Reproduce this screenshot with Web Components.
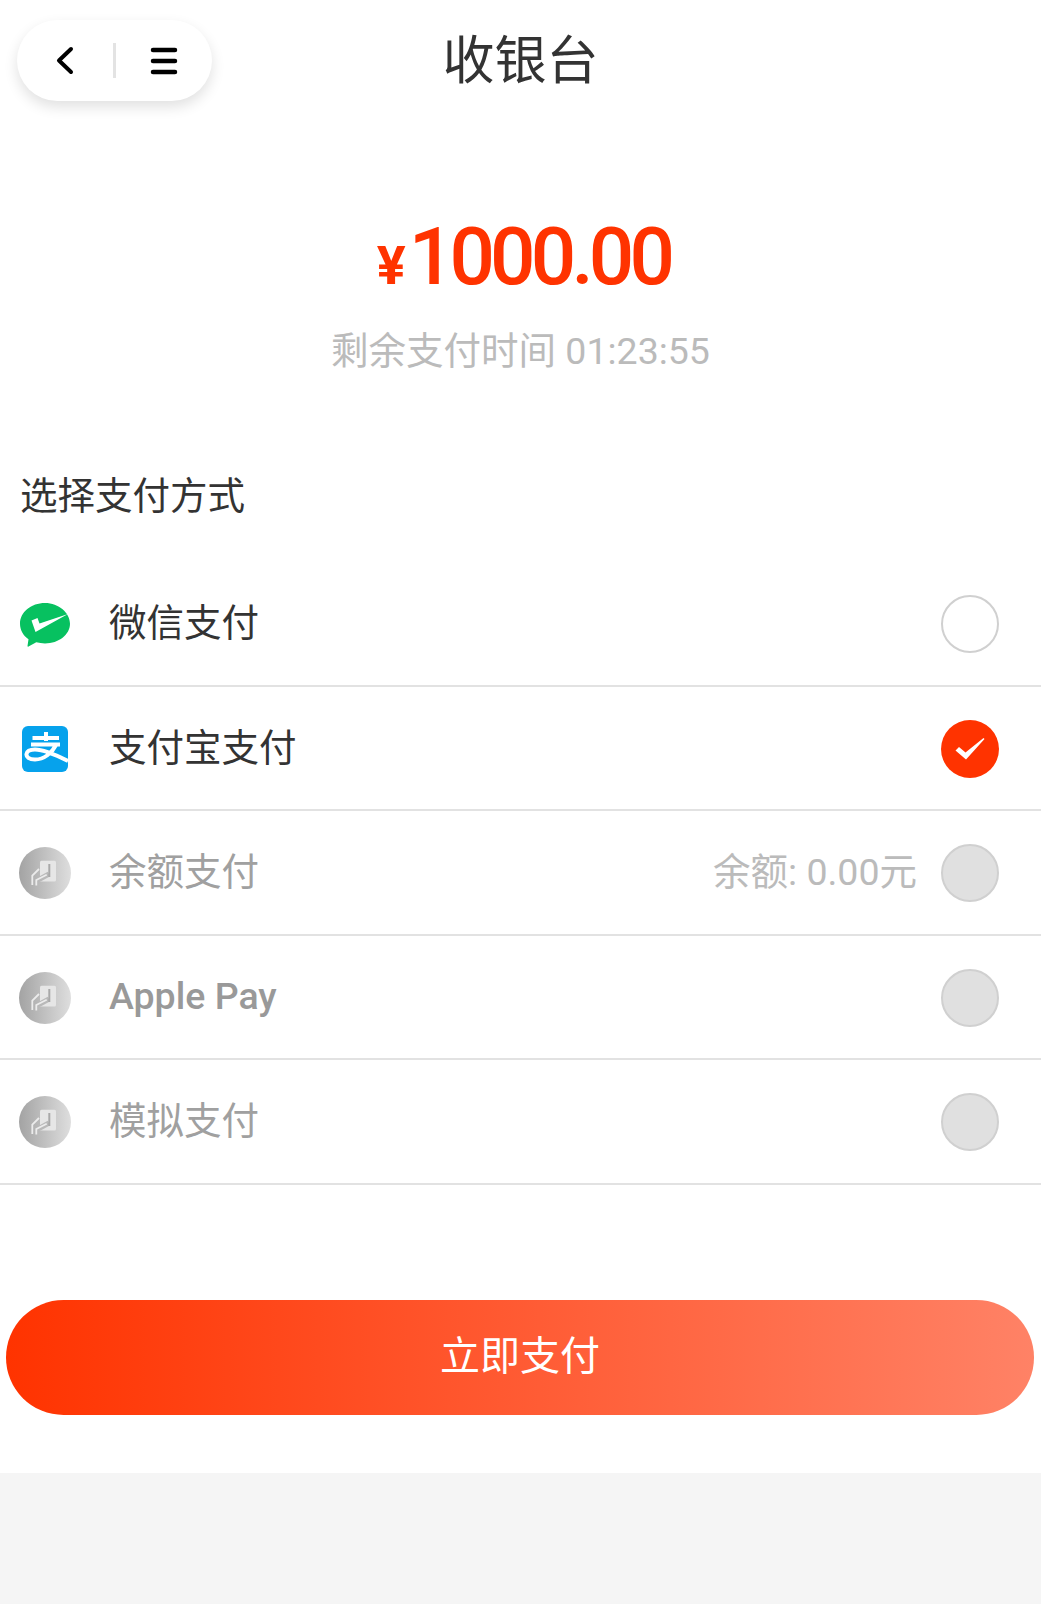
<!DOCTYPE html>
<html><head><meta charset="utf-8">
<style>
html,body{margin:0;padding:0;background:#f5f5f5}
body{font-family:Roboto,"Noto Sans CJK SC",sans-serif;color:#333}
</style></head>
<body>
<checkout-page>
  <nav-bar title="收银台"></nav-bar>
  <amount-panel amount="1000.00" note="剩余支付时间 01:23:55"></amount-panel>
  <section-title>选择支付方式</section-title>
  <pay-option label="微信支付" icon="wechat"></pay-option>
  <pay-option label="支付宝支付" icon="alipay" checked></pay-option>
  <pay-option label="余额支付" icon="grey" disabled extra="余额: 0.00元"></pay-option>
  <pay-option label="Apple Pay" icon="grey" disabled bold></pay-option>
  <pay-option label="模拟支付" icon="grey" disabled></pay-option>
  <pay-button>立即支付</pay-button>
</checkout-page>
<script>
class CheckoutPage extends HTMLElement{constructor(){super();this.attachShadow({mode:'open'}).innerHTML=`<style>:host{display:block;background:#fff;height:1473px;overflow:hidden}</style><slot></slot>`}}
class NavBar extends HTMLElement{connectedCallback(){this.attachShadow({mode:'open'}).innerHTML=`<style>
:host{display:block;height:121px;position:relative}
.bar{display:flex;align-items:center;justify-content:center;height:121px;padding-bottom:8px;box-sizing:border-box;font-size:52px;color:#333}
.cap{position:absolute;left:17px;top:20px;width:195px;height:81px;border-radius:41px;background:#fff;box-shadow:0 6px 14px rgba(0,0,0,.12);display:flex;align-items:center}
.cap svg{display:block}
.side{flex:1;display:flex;justify-content:center}
.div{width:3px;height:35px;background:#e3e3e3}
</style>
<div class="bar"><span>${this.getAttribute('title')}</span></div>
<div class="cap">
<div class="side"><svg width="20" height="30" viewBox="0 0 20 30"><path d="M16 3 L4 14.500 L16 26" fill="none" stroke="#000" stroke-width="4" stroke-linecap="round" stroke-linejoin="round"/></svg></div>
<div class="div"></div>
<div class="side"><svg width="28" height="28" viewBox="0 0 28 28"><path d="M3 3H25M3 14H25M3 25H25" stroke="#000" stroke-width="4.500" stroke-linecap="round"/></svg></div>
</div>`}}
class AmountPanel extends HTMLElement{connectedCallback(){this.attachShadow({mode:'open'}).innerHTML=`<style>
:host{display:block;text-align:center}
.amt{margin-top:96px;padding-left:6px;height:80px;line-height:80px;color:#ff3300;font-weight:500;font-size:80px;letter-spacing:-4.800px;white-space:nowrap}
.cur{font-size:54px;font-weight:700;letter-spacing:0;margin-right:3px}
.note{margin-top:28px;height:52px;line-height:52px;font-size:37.500px;color:#bbb}
</style>
<div class="amt"><span class="cur">¥</span>${this.getAttribute('amount')}</div>
<div class="note">${this.getAttribute('note')}</div>`}}
class SectionTitle extends HTMLElement{constructor(){super();this.attachShadow({mode:'open'}).innerHTML=`<style>:host{display:block;padding:93px 20px 0;height:92px;line-height:52px;font-size:37.500px;color:#333}</style><slot></slot>`}}
const ICONS={
wechat:`<svg width="50" height="44" viewBox="0 0 50 44" style="margin-top:2px"><path d="M25 0C11.200 0 0 9 0 20.700c0 6.300 3.300 11.800 8.500 15.500L7.500 43c-.100.700.500 1 1 .600l7.800-4.300c2.700.700 5.700 1.100 8.700 1.100 13.800 0 25-8.900 25-19.700S38.800 0 25 0z" fill="#07c160"/><path d="M11.500 17.500 15.500 29 48 11 19.500 20.500 17.500 15z" fill="#fff"/></svg>`,
alipay:`<svg width="46" height="46" viewBox="0 0 46 46"><rect width="46" height="46" rx="6" fill="#06a2ec"/><path d="M24 6V15M10.500 12H37M9 18.500H38M34 19C30 27 22 33.500 13 33.500 7 33.500 4 31 4.500 28 5 25 8.500 23.500 13 23.500 22 23.500 34 29 46 35" fill="none" stroke="#fff" stroke-width="4"/></svg>`,
grey:`<svg width="52" height="52" viewBox="0 0 52 52"><defs><linearGradient id="g" x1="0" y1="0" x2="1" y2="0"><stop offset="0" stop-color="#a3a3a3"/><stop offset="1" stop-color="#dedede"/></linearGradient></defs><circle cx="26" cy="26" r="26" fill="url(#g)"/><path d="M22.500 13.700H35.500A1.500 1.500 0 0 1 37 15.200V33A1.500 1.500 0 0 1 35.500 34.500H21V15.200A1.500 1.500 0 0 1 22.500 13.700z" fill="#e6e6e6"/><path d="M20 32.500 30 27" stroke="#b9b9b9" stroke-width="5" fill="none"/><path d="M30.300 17V30" stroke="#a8a8a8" stroke-width="2"/><path d="M13.300 38V28.700L20 22M17.300 38.500V33L27.700 27.700" fill="none" stroke="#ececec" stroke-width="1.800"/></svg>`};
class PayOption extends HTMLElement{connectedCallback(){
const dis=this.hasAttribute('disabled'),chk=this.hasAttribute('checked'),extra=this.getAttribute('extra');
this.attachShadow({mode:'open'}).innerHTML=`<style>
:host{display:flex;align-items:center;height:122.500px;padding:0 42px 0 19px;border-bottom:2px solid #e2e2e2;font-size:37.500px}
.ic{width:52px;height:52px;margin-top:2px;display:flex;align-items:center;justify-content:center;flex:none}
.lb{margin-left:38px;flex:1;padding-bottom:${this.hasAttribute('bold')?2:7}px;color:${dis?'#a0a0a0':'#333'};${this.hasAttribute('bold')?'font-weight:500;color:#999;':''}}
.ex{color:#bbb;margin-right:24px;padding-bottom:7px}
.r{box-sizing:border-box;width:58px;height:58px;margin-top:2px;border-radius:50%;flex:none;display:flex;align-items:center;justify-content:center;
border:2.500px solid #d0d0d0;background:${dis?'#e0e0e0':'#fff'}}
.r.on{border:0;background:#ff3300}
</style>
<span class="ic">${ICONS[this.getAttribute('icon')]}</span>
<span class="lb">${this.getAttribute('label')}</span>
${extra?`<span class="ex">${extra}</span>`:''}
<span class="r${chk?' on':''}">${chk?'<svg width="30" height="24" viewBox="0 0 30 24"><path d="M.500 13.500 4 10 10.500 15.500 28.500 1 29.500 2 11 22.500z" fill="#fff"/></svg>':''}</span>`}}
class PayButton extends HTMLElement{constructor(){super();this.attachShadow({mode:'open'}).innerHTML=`<style>
:host{display:flex;align-items:center;justify-content:center;box-sizing:border-box;padding-bottom:8px;height:115px;margin:115px 7px 0 6px;border-radius:58px;background:linear-gradient(90deg,#ff3300,#ff8266);color:#fff;font-size:40px}
</style><slot></slot>`}}
customElements.define('checkout-page',CheckoutPage);
customElements.define('nav-bar',NavBar);
customElements.define('amount-panel',AmountPanel);
customElements.define('section-title',SectionTitle);
customElements.define('pay-option',PayOption);
customElements.define('pay-button',PayButton);
</script>
</body></html>
